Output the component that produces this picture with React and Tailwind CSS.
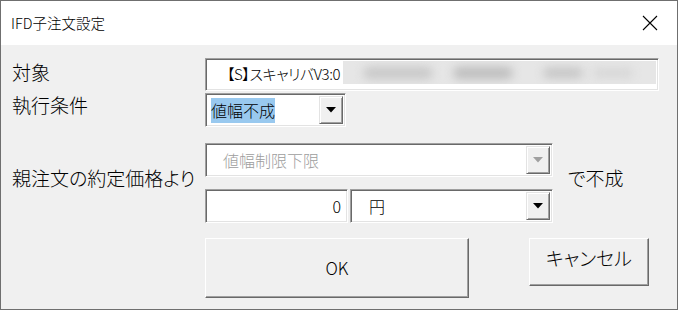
import React from "react";

const sunken =
  "border border-t-[#a0a0a0] border-l-[#a0a0a0] border-b-white border-r-white shadow-[inset_1px_1px_0_#696969,inset_-1px_-1px_0_#e3e3e3]";
const raised =
  "border border-t-[#e3e3e3] border-l-[#e3e3e3] border-b-[#696969] border-r-[#696969] shadow-[inset_1px_1px_0_#ffffff,inset_-1px_-1px_0_#a0a0a0]";
const raisedBtn =
  "border border-t-white border-l-white border-b-[#696969] border-r-[#696969] shadow-[inset_-1px_-1px_0_#a0a0a0]";

function Arrow({ disabled }) {
  return (
    <div className={`w-[24px] h-full flex items-center justify-center bg-[#f0f0f0] ${raised}`}>
      <svg width="10" height="6" viewBox="0 0 10 6">
        <path d="M0 0 H10 L5 5.5 Z" fill={disabled ? "#a0a0a0" : "#000"} />
      </svg>
    </div>
  );
}

export default function App() {
  const font = "font-['Noto_Sans_CJK_JP','Noto_Sans',sans-serif] [font-feature-settings:'palt'] font-light";
  return (
    <div className={`w-[678px] h-[310px] border border-[#6f6f6f] bg-[#f0f0f0] flex flex-col text-black ${font}`}>
      <div className="h-[44px] bg-white flex items-center justify-between pl-[10px] pr-[19px]">
        <span className="text-[14.5px] leading-none">IFD子注文設定</span>
        <svg width="16" height="16" viewBox="0 0 16 16">
          <path d="M1 1 L15 15 M15 1 L1 15" stroke="#000" strokeWidth="1.1" />
        </svg>
      </div>
      <div className="flex flex-col pt-[13px] pl-[11px]">
        <div className="flex items-center">
          <div className="w-[193px] text-[19px] leading-none mb-[6px]">対象</div>
          <div className={`w-[454px] h-[33px] bg-white flex items-stretch p-[2px] overflow-hidden ${sunken}`}>
            <div className="flex items-center pl-[19px] text-[15px] tracking-[-0.4px] whitespace-nowrap">【S】スキャリバV3:0</div>
            <div className="flex-1 relative overflow-hidden bg-[#e6e6e6] mb-[4px] ml-[3px]">
              <div className="absolute left-[20px] top-[6px] w-[70px] h-[12px] rounded-full bg-[#c8c8c8] blur-[5px]" />
              <div className="absolute left-[110px] top-[6px] w-[60px] h-[12px] rounded-full bg-[#bdbdbd] blur-[5px]" />
              <div className="absolute left-[200px] top-[7px] w-[40px] h-[10px] rounded-full bg-[#c4c4c4] blur-[5px]" />
              <div className="absolute left-[250px] top-[8px] w-[40px] h-[8px] rounded-full bg-[#d4d4d4] blur-[5px]" />
            </div>
          </div>
        </div>
        <div className="flex items-center mt-[2px]">
          <div className="w-[193px] text-[19px] leading-none mb-[12px]">執行条件</div>
          <div className={`w-[141px] h-[34px] bg-white flex items-stretch p-[2px] ${sunken}`}>
            <div className="flex-1 flex items-center pl-[3px]">
              <span className="bg-[#99c9ef] text-[16px] leading-[25px] h-[25px]">値幅不成</span>
            </div>
            <Arrow />
          </div>
        </div>
        <div className="flex items-center mt-[16px]">
          <div className="w-[193px] text-[19px] leading-none mb-[12px]">親注文の約定価格より</div>
          <div className="flex flex-col">
            <div className={`w-[348px] h-[34px] bg-white flex items-stretch p-[2px] ${sunken}`}>
              <div className="flex-1 flex items-center pl-[15px] text-[16px] text-[#9d9d9d]">値幅制限下限</div>
              <Arrow disabled />
            </div>
            <div className="flex mt-[12px] gap-[2px]">
              <div className={`w-[143px] h-[34px] bg-white flex items-center justify-end pr-[6px] text-[16px] ${sunken}`}>0</div>
              <div className={`w-[203px] h-[34px] bg-white flex items-stretch p-[2px] ${sunken}`}>
                <div className="flex-1 flex items-center pl-[16px] text-[16px]">円</div>
                <Arrow />
              </div>
            </div>
          </div>
          <div className="ml-[15px] text-[19px] leading-none mb-[12px]">で不成</div>
        </div>
        <div className="flex items-start mt-[15px] pl-[193px]">
          <div className={`w-[264px] h-[60px] flex items-center justify-center text-[17px] bg-[#f0f0f0] ${raisedBtn}`}>OK</div>
          <div className={`ml-[60px] w-[120px] h-[48px] flex items-center justify-center text-[19px] pb-[8px] bg-[#f0f0f0] ${raisedBtn}`}>キャンセル</div>
        </div>
      </div>
    </div>
  );
}
